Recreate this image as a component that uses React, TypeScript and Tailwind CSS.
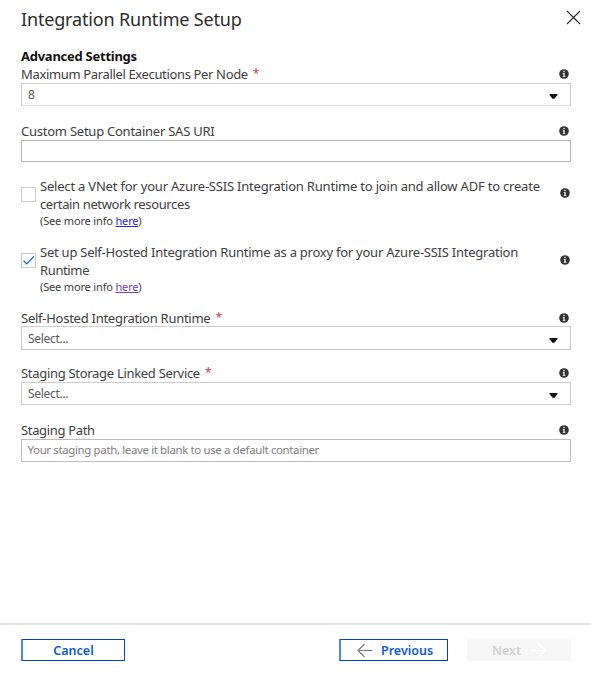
import React from "react";

function InfoIcon({ className = "" }: { className?: string }) {
  return (
    <svg className={`h-[10px] w-[10px] shrink-0 ${className}`} viewBox="0 0 10 10">
      <circle cx="5" cy="5" r="4.8" fill="#333333" />
      <rect x="4.3" y="1.9" width="1.4" height="1.3" fill="#ffffff" />
      <path d="M3.7 4.1h2v3.2h.7v.7H3.7v-.7h.6V4.8h-.6z" fill="#e8e8e8" />
    </svg>
  );
}

function Caret() {
  return (
    <svg className="mt-[4px] mr-3 h-[5px] w-[9px]" viewBox="0 0 9 5">
      <path d="M.5 0h8v1L5.500 4.700h-2L.5 1z" fill="#111111" />
    </svg>
  );
}

function Label({ text, required, spacing }: { text: string; required?: boolean; spacing: string }) {
  return (
    <div className="flex h-[18px] items-center justify-between pr-[2px]">
      <label className="flex whitespace-nowrap text-[13px] leading-[18px] text-[#404040]">
        <span className={spacing}>{text}</span>
        {required && <span className="ml-[5px] text-[12px] text-[#c8404a]">*</span>}
      </label>
      <InfoIcon className="-mt-px" />
    </div>
  );
}

function Select({ value, className }: { value: string; className: string }) {
  return (
    <div className={`flex items-center justify-between border border-[#cccccc] pl-[6px] text-[12px] text-[#5a5a5a] ${className}`}>
      <span className="tracking-[-0.3px]">{value}</span>
      <Caret />
    </div>
  );
}

interface OptionProps {
  first: string;
  second: string;
  firstSpacing: string;
  checked?: boolean;
  linkColor: string;
  infoOffset: string;
}

function Option({ first, second, firstSpacing, checked, linkColor, infoOffset }: OptionProps) {
  return (
    <div className="flex items-start">
      <div className="mt-[10px] flex h-[15px] w-[15px] shrink-0 items-center justify-center border border-[#cccccc]">
        {checked && (
          <svg className="h-[13px] w-[13px]" viewBox="0 0 13 13" fill="none">
            <path d="M1.500 6.800 4.800 9.800 11.800 2.500" stroke="#1464dc" strokeWidth="1.2" />
          </svg>
        )}
      </div>
      <div className="ml-1 min-w-0 flex-1 whitespace-nowrap text-[13px] leading-[18px] text-[#404040]">
        <div className={firstSpacing}>{first}</div>
        <div className="tracking-[-0.37px]">{second}</div>
        <div className="text-[11px] leading-4 tracking-[-0.16px]">
          (See more info <a className={`underline ${linkColor}`}>here</a>)
        </div>
      </div>
      <InfoIcon className={`mr-[1px] ${infoOffset}`} />
    </div>
  );
}

export default function App() {
  return (
    <div className="flex h-[675px] w-[591px] flex-col bg-white font-['Noto_Sans',sans-serif]">
      <header className="flex h-[47px] items-start justify-between pt-[7px] pr-[10px] pl-[21px]">
        <h1 className="whitespace-nowrap text-[18px] leading-6 tracking-[-0.17px] text-[#2c2c2c]">Integration Runtime Setup</h1>
        <svg className="mt-[3px] h-[15px] w-[15px]" viewBox="0 0 15 15" fill="none" stroke="#222222" strokeWidth="1.1">
          <path d="M1 1l13 13M14 1 1 14" />
        </svg>
      </header>

      <main className="flex flex-1 flex-col pr-[20px] pl-[21px]">
        <h2 className="text-[13px] leading-[18px] font-bold tracking-[-0.26px] text-[#111111]">Advanced Settings</h2>
        <Label text="Maximum Parallel Executions Per Node" required spacing="tracking-[-0.35px]" />
        <Select value="8" className="h-[23px] border-b-[#dddddd]" />

        <div className="mt-[16px]">
          <Label text="Custom Setup Container SAS URI" spacing="tracking-[-0.24px]" />
          <div className="h-[22px] border border-[#b8b8b8]" />
        </div>

        <div className="mt-[15px]">
          <Option
            first="Select a VNet for your Azure-SSIS Integration Runtime to join and allow ADF to create"
            second="certain network resources"
            firstSpacing="tracking-[-0.2px]"
            linkColor="text-[#2a2ae0]"
            infoOffset="mt-[11px]"
          />
        </div>
        <div className="mt-[14px]">
          <Option
            first="Set up Self-Hosted Integration Runtime as a proxy for your Azure-SSIS Integration"
            second="Runtime"
            firstSpacing="tracking-[-0.24px]"
            checked
            linkColor="text-[#7a45a8]"
            infoOffset="mt-[12px]"
          />
        </div>

        <div className="mt-[14px]">
          <Label text="Self-Hosted Integration Runtime" required spacing="tracking-[-0.26px]" />
          <Select value="Select..." className="-mt-px h-[24px] pt-px" />
        </div>
        <div className="mt-[14px]">
          <Label text="Staging Storage Linked Service" required spacing="tracking-[-0.3px]" />
          <Select value="Select..." className="h-[23px]" />
        </div>
        <div className="mt-[16px]">
          <Label text="Staging Path" spacing="tracking-[-0.34px]" />
          <div className="h-[23px] border border-[#bcbcbc] pl-[5.5px] text-[11.5px] leading-[20px] tracking-[-0.38px] text-[#808080]">
            Your staging path, leave it blank to use a default container
          </div>
        </div>
      </main>

      <footer className="flex h-[52px] items-start border-t-2 border-[#e5e5e5] pt-[14px] pr-[20px] pl-[21px] text-[12.5px] font-semibold">
        <button className="h-[22px] w-[104px] border border-l-2 border-[#0040c8] border-l-[#4a88e0] pt-px leading-[19px] text-[#0c5ad6]">Cancel</button>
        <button className="ml-[214px] flex h-[22px] w-[109px] items-center border border-l-2 border-[#0040c8] border-l-[#4a88e0] pl-[16px] text-[#0c5ad6]">
          <svg className="mr-[8px] h-[15px] w-4" viewBox="0 0 16 15" fill="none" stroke="#777777" strokeWidth="1.1">
            <path d="M15.500 7.500H1M7.500 1 1 7.500 7.500 14" />
          </svg>
          <span className="pt-[2px]">Previous</span>
        </button>
        <button className="ml-[19px] flex h-[22px] w-[104px] items-center bg-[#f7f7f7] pl-[25px] text-[#d2d2d2]">
          <span className="pt-[2px]">Next</span>
          <svg className="ml-[9px] h-[15px] w-4" viewBox="0 0 16 15" fill="none" stroke="#ffffff" strokeWidth="1.1">
            <path d="M.5 7.500H15M8.500 1 15 7.500 8.500 14" />
          </svg>
        </button>
      </footer>
    </div>
  );
}
